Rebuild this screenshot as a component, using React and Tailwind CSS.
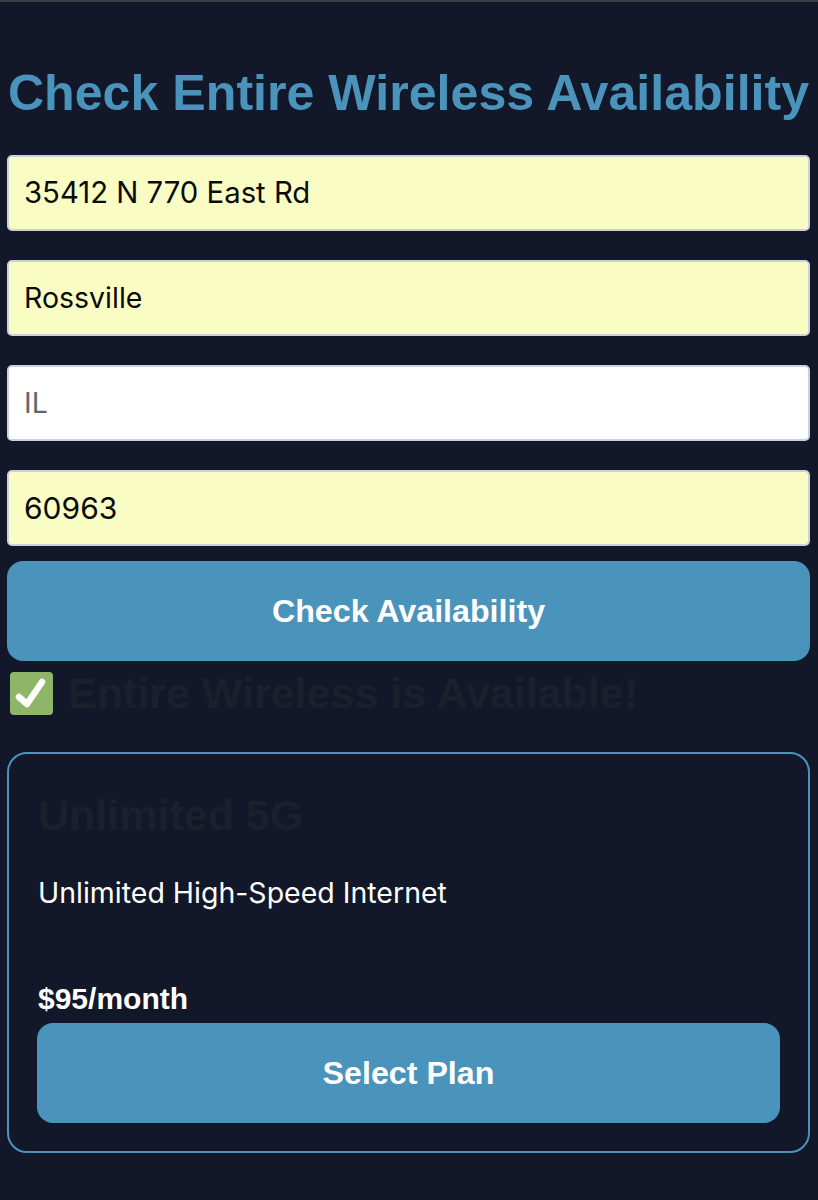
const Field = ({ value, filled = true, size = "text-[29.3px]" }) => (
  <div className={`h-[76px] w-full rounded-[5px] border-2 border-[#ccd0dc] flex items-center pl-[15px] font-['Inter',sans-serif] ${size} ${filled ? "bg-[#fafdc3] text-[#0b0b0b]" : "bg-white text-[#5f6670]"}`}>
    {value}
  </div>
);

export default function App() {
  return (
    <div className="min-h-[1200px] w-[818px] bg-[#121829] font-['Liberation_Sans',sans-serif] border-t-2 border-[#3a3d48] pl-[7px] pr-[8px] overflow-hidden">
      <h1 className="mt-[62px] h-[59px] flex items-center justify-center text-[50.15px] font-bold text-[#4a94bc] whitespace-nowrap">
        Check Entire Wireless Availability
      </h1>
      <div className="mt-[32px] flex flex-col gap-[29px]">
        <Field value="35412 N 770 East Rd" />
        <Field value="Rossville" size="text-[28.5px]" />
        <Field value="IL" filled={false} size="text-[28.5px]" />
        <Field value="60963" size="text-[30px]" />
      </div>
      <button className="mt-[15px] h-[100px] w-full rounded-[16px] bg-[#4a94bc] text-[32.2px] font-bold text-white">
        Check Availability
      </button>
      <div className="mt-[10px] h-[44px] flex items-center">
        <svg width="44" height="44" viewBox="0 0 44 44" className="ml-[2px] shrink-0">
          <rect x="1" y="1" width="43" height="43" rx="4" fill="#8fb568" />
          <path d="M10 26 L18 33 L33 11" fill="none" stroke="#fff" strokeWidth="6.5" strokeLinecap="round" strokeLinejoin="round" />
        </svg>
        <span className="ml-[15px] text-[43px] font-bold text-[#1b202c] whitespace-nowrap">Entire Wireless is Available!</span>
      </div>
      <div className="mt-[37px] h-[401px] rounded-[20px] border-2 border-[#4a94bc] px-[28px] flex flex-col">
        <h2 className="mt-[39px] ml-px h-[45px] flex items-center text-[43px] font-bold text-[#1b202c]">Unlimited 5G</h2>
        <p className="mt-[37px] ml-px h-[36px] flex items-center text-[28.5px] text-white font-['Inter',sans-serif]">Unlimited High-Speed Internet</p>
        <p className="mt-[69px] ml-px h-[36px] flex items-center text-[30px] font-bold text-white">$95/month</p>
        <button className="mt-[7px] h-[100px] w-full rounded-[16px] bg-[#4a94bc] text-[32.2px] font-bold text-white">
          Select Plan
        </button>
      </div>
    </div>
  );
}
